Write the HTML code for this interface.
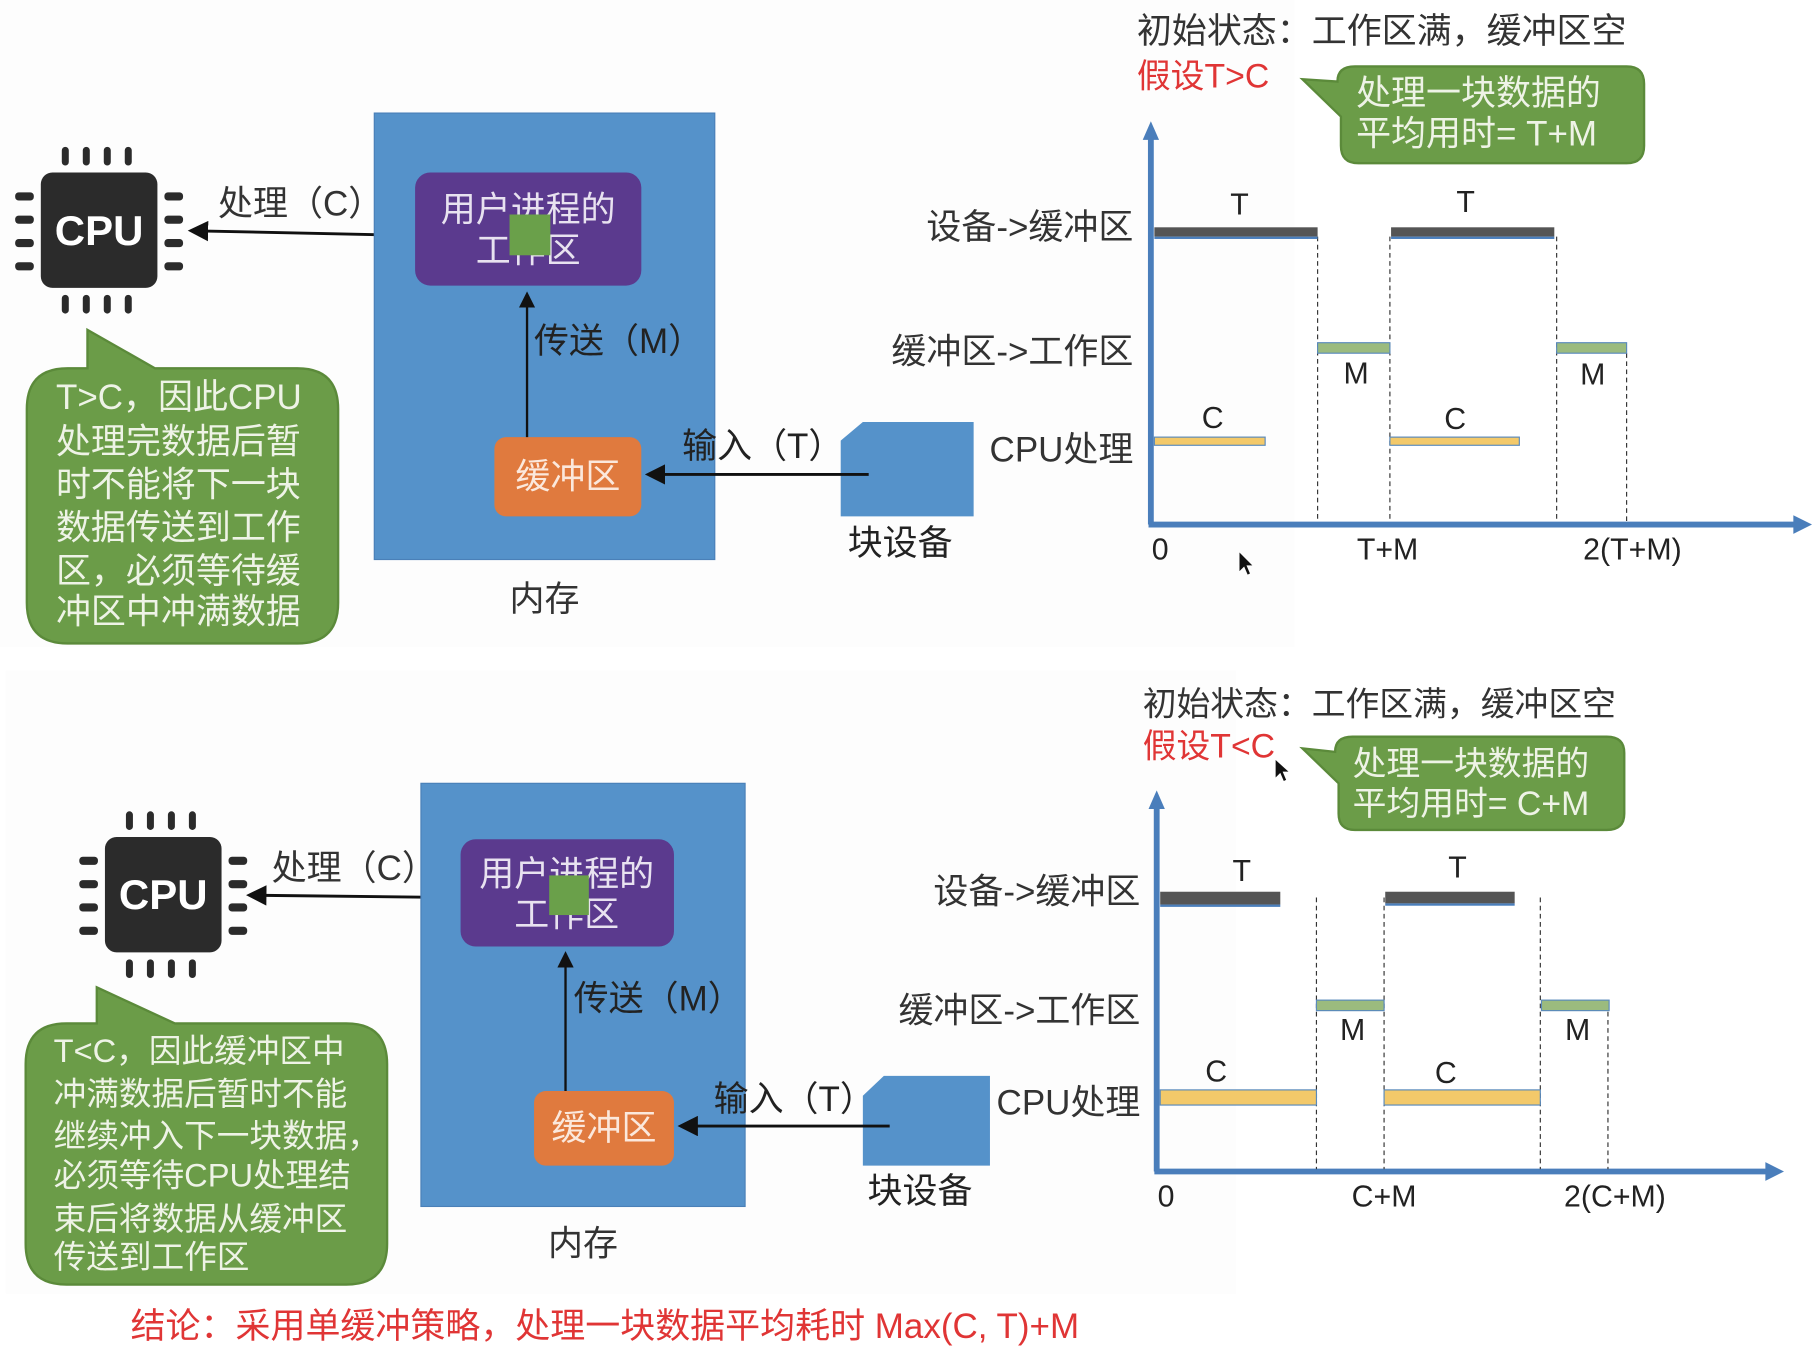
<!DOCTYPE html>
<html><head><meta charset="utf-8"><style>
html,body{margin:0;padding:0;background:#fff;}
svg{display:block;}
text{font-family:"Liberation Sans","Noto Sans CJK SC",sans-serif;}
</style></head><body>
<svg width="1819" height="1351" viewBox="0 0 1560 1159" preserveAspectRatio="none" xmlns="http://www.w3.org/2000/svg">
<defs>
<marker id="ah" markerWidth="7" markerHeight="7" refX="5" refY="3.5" orient="auto"><path d="M0,0 L7,3.5 L0,7 z" fill="#111"/></marker>
<g id="chip">
 <rect x="0" y="0" width="100" height="99" rx="10" fill="#2b2b2b"/>
 <text x="50" y="62" text-anchor="middle" font-size="36" font-weight="bold" fill="#fff">CPU</text>
 <rect x="18" y="-22" width="6" height="16" rx="3" fill="#2b2b2b"/><rect x="36" y="-22" width="6" height="16" rx="3" fill="#2b2b2b"/><rect x="54" y="-22" width="6" height="16" rx="3" fill="#2b2b2b"/><rect x="72" y="-22" width="6" height="16" rx="3" fill="#2b2b2b"/>
 <rect x="18" y="105" width="6" height="16" rx="3" fill="#2b2b2b"/><rect x="36" y="105" width="6" height="16" rx="3" fill="#2b2b2b"/><rect x="54" y="105" width="6" height="16" rx="3" fill="#2b2b2b"/><rect x="72" y="105" width="6" height="16" rx="3" fill="#2b2b2b"/>
 <rect x="-22" y="17" width="16" height="7" rx="3" fill="#2b2b2b"/><rect x="-22" y="37" width="16" height="7" rx="3" fill="#2b2b2b"/><rect x="-22" y="57" width="16" height="7" rx="3" fill="#2b2b2b"/><rect x="-22" y="77" width="16" height="7" rx="3" fill="#2b2b2b"/>
 <rect x="106" y="17" width="16" height="7" rx="3" fill="#2b2b2b"/><rect x="106" y="37" width="16" height="7" rx="3" fill="#2b2b2b"/><rect x="106" y="57" width="16" height="7" rx="3" fill="#2b2b2b"/><rect x="106" y="77" width="16" height="7" rx="3" fill="#2b2b2b"/>
</g>
</defs>
<rect x="0" y="0" width="1110" height="555" fill="#fdfdfd"/>
<rect x="5" y="575" width="1055" height="535" fill="#fdfdfd"/>

<!-- ========== TOP ========== -->
<text x="975" y="37" font-size="30" fill="#333">初始状态：工作区满，缓冲区空</text>
<text x="975" y="75" font-size="29" fill="#e03535">假设T&gt;C</text>
<path d="M1147,70 L1117,68 L1150,100 L1150,125 Q1150,140 1165,140 L1395,140 Q1410,140 1410,125 L1410,72 Q1410,57 1395,57 L1162,57 Q1147,57 1147,70 z" fill="#6b9c48" stroke="#5b8a3a" stroke-width="2"/>
<text x="1163" y="90" font-size="30" fill="#eef3e6">处理一块数据的</text>
<text x="1163" y="125" font-size="30" fill="#eef3e6">平均用时= T+M</text>

<line x1="987" y1="450" x2="987" y2="118" stroke="#4a7ebb" stroke-width="5"/>
<path d="M980,120 L987,104 L994,120 z" fill="#4a7ebb"/>
<line x1="985" y1="450" x2="1540" y2="450" stroke="#4a7ebb" stroke-width="5"/>
<path d="M1538,442 L1554,450 L1538,458 z" fill="#4a7ebb"/>
<g stroke="#333" stroke-width="1" stroke-dasharray="4,3">
<line x1="1130" y1="203" x2="1130" y2="448"/><line x1="1192" y1="203" x2="1192" y2="448"/><line x1="1335" y1="203" x2="1335" y2="448"/><line x1="1395" y1="303" x2="1395" y2="448"/>
</g>
<g font-size="30" fill="#333" text-anchor="end">
<text x="972" y="205">设备-&gt;缓冲区</text>
<text x="972" y="312">缓冲区-&gt;工作区</text>
<text x="972" y="396">CPU处理</text>
</g>
<rect x="990" y="195" width="140" height="8" fill="#555"/><rect x="990" y="203" width="140" height="2" fill="#4a7ebb"/>
<rect x="1193" y="195" width="140" height="8" fill="#555"/><rect x="1193" y="203" width="140" height="2" fill="#4a7ebb"/>
<rect x="1130" y="294" width="62" height="9" fill="#9bbb7e" stroke="#5a8abb" stroke-width="1"/>
<rect x="1335" y="294" width="60" height="9" fill="#9bbb7e" stroke="#5a8abb" stroke-width="1"/>
<rect x="990" y="375" width="95" height="7" fill="#f3c96a" stroke="#5a8abb" stroke-width="1"/>
<rect x="1192" y="375" width="111" height="7" fill="#f3c96a" stroke="#5a8abb" stroke-width="1"/>
<g font-size="26" fill="#222" text-anchor="middle">
<text x="1063" y="184">T</text><text x="1257" y="182">T</text>
<text x="1163" y="329">M</text><text x="1366" y="330">M</text>
<text x="1040" y="367">C</text><text x="1248" y="368">C</text>
<text x="995" y="480">0</text><text x="1190" y="480">T+M</text><text x="1400" y="480">2(T+M)</text>
</g>
<path d="M1063,474 L1063,490 L1067,486 L1070,493 L1072,492 L1069,485 L1074,485 z" fill="#111"/>

<use href="#chip" x="35" y="148"/>
<line x1="355" y1="202" x2="166" y2="198" stroke="#111" stroke-width="2.5" marker-end="url(#ah)"/>
<text x="187" y="185" font-size="30" fill="#333">处理（C）</text>
<rect x="321" y="97" width="292" height="383" fill="#5592ca" stroke="#4a80b8" stroke-width="1"/>
<text x="467" y="524" font-size="30" fill="#333" text-anchor="middle">内存</text>
<rect x="356" y="148" width="194" height="97" rx="13" fill="#5b3a8e"/>
<text x="453" y="190" font-size="30" fill="#e8e2f0" text-anchor="middle">用户进程的</text>
<text x="453" y="225" font-size="30" fill="#e8e2f0" text-anchor="middle">工作区</text>
<rect x="437" y="184" width="35" height="35" fill="#6aa04a"/>
<rect x="424" y="375" width="126" height="68" rx="10" fill="#e07a3e"/>
<text x="487" y="419" font-size="30" fill="#fbe8dc" text-anchor="middle">缓冲区</text>
<line x1="452" y1="375" x2="452" y2="254" stroke="#111" stroke-width="2" marker-end="url(#ah)"/>
<text x="458" y="303" font-size="30" fill="#222">传送（M）</text>
<path d="M721,378 L740,362 L835,362 L835,443 L721,443 z" fill="#5592ca"/>
<text x="772" y="476" font-size="30" fill="#222" text-anchor="middle">块设备</text>
<line x1="745" y1="407" x2="558" y2="407" stroke="#111" stroke-width="2.5" marker-end="url(#ah)"/>
<text x="585" y="393" font-size="30" fill="#222">输入（T）</text>
<path d="M75,283 L133,316 L255,316 Q290,316 290,351 L290,517 Q290,552 255,552 L58,552 Q23,552 23,517 L23,351 Q23,316 58,316 L75,316 z" fill="#6b9c48" stroke="#5b8a3a" stroke-width="2"/>
<g font-size="30" fill="#eef3e6">
<text x="48" y="351">T&gt;C，因此CPU</text>
<text x="48" y="389">处理完数据后暂</text>
<text x="48" y="426">时不能将下一块</text>
<text x="48" y="463">数据传送到工作</text>
<text x="48" y="500">区，必须等待缓</text>
<text x="48" y="535">冲区中冲满数据</text>
</g>

<!-- ========== BOTTOM ========== -->
<text x="980" y="614" font-size="29" fill="#333">初始状态：工作区满，缓冲区空</text>
<text x="980" y="650" font-size="29" fill="#e03535">假设T&lt;C</text>
<path d="M1145,645 L1117,642 L1148,672 L1148,698 Q1148,712 1162,712 L1378,712 Q1393,712 1393,698 L1393,646 Q1393,632 1378,632 L1160,632 Q1145,632 1145,645 z" fill="#6b9c48" stroke="#5b8a3a" stroke-width="2"/>
<text x="1160" y="665" font-size="29" fill="#eef3e6">处理一块数据的</text>
<text x="1160" y="699" font-size="29" fill="#eef3e6">平均用时= C+M</text>
<path d="M1094,652 L1094,667 L1098,663 L1101,670 L1103,669 L1100,662 L1105,662 z" fill="#111"/>

<line x1="992" y1="1005" x2="992" y2="692" stroke="#4a7ebb" stroke-width="5"/>
<path d="M985,694 L992,678 L999,694 z" fill="#4a7ebb"/>
<line x1="990" y1="1005" x2="1516" y2="1005" stroke="#4a7ebb" stroke-width="5"/>
<path d="M1514,997 L1530,1005 L1514,1013 z" fill="#4a7ebb"/>
<g stroke="#333" stroke-width="1" stroke-dasharray="4,3">
<line x1="1129" y1="770" x2="1129" y2="1003"/><line x1="1187" y1="770" x2="1187" y2="1003"/><line x1="1321" y1="770" x2="1321" y2="1003"/><line x1="1379" y1="868" x2="1379" y2="1003"/>
</g>
<g font-size="30" fill="#333" text-anchor="end">
<text x="978" y="775">设备-&gt;缓冲区</text>
<text x="978" y="877">缓冲区-&gt;工作区</text>
<text x="978" y="956">CPU处理</text>
</g>
<rect x="995" y="765" width="103" height="11" fill="#555"/><rect x="995" y="776" width="103" height="2" fill="#4a7ebb"/>
<rect x="1188" y="765" width="111" height="10" fill="#555"/><rect x="1188" y="775" width="111" height="2" fill="#4a7ebb"/>
<rect x="1129" y="858" width="58" height="9" fill="#9bbb7e" stroke="#5a8abb" stroke-width="1"/>
<rect x="1322" y="858" width="58" height="9" fill="#9bbb7e" stroke="#5a8abb" stroke-width="1"/>
<rect x="995" y="935" width="134" height="13" fill="#f3c96a" stroke="#5a8abb" stroke-width="1"/>
<rect x="1187" y="935" width="134" height="13" fill="#f3c96a" stroke="#5a8abb" stroke-width="1"/>
<g font-size="26" fill="#222" text-anchor="middle">
<text x="1065" y="756">T</text><text x="1250" y="753">T</text>
<text x="1160" y="892">M</text><text x="1353" y="892">M</text>
<text x="1043" y="928">C</text><text x="1240" y="929">C</text>
<text x="1000" y="1035">0</text><text x="1187" y="1035">C+M</text><text x="1385" y="1035">2(C+M)</text>
</g>

<use href="#chip" x="90" y="718"/>
<line x1="392" y1="770" x2="216" y2="768" stroke="#111" stroke-width="2.5" marker-end="url(#ah)"/>
<text x="233" y="755" font-size="30" fill="#333">处理（C）</text>
<rect x="361" y="672" width="278" height="363" fill="#5592ca" stroke="#4a80b8" stroke-width="1"/>
<text x="500" y="1077" font-size="30" fill="#333" text-anchor="middle">内存</text>
<rect x="395" y="720" width="183" height="92" rx="13" fill="#5b3a8e"/>
<text x="486" y="760" font-size="30" fill="#e8e2f0" text-anchor="middle">用户进程的</text>
<text x="486" y="795" font-size="30" fill="#e8e2f0" text-anchor="middle">工作区</text>
<rect x="471" y="751" width="34" height="34" fill="#6aa04a"/>
<rect x="458" y="936" width="120" height="64" rx="10" fill="#e07a3e"/>
<text x="518" y="978" font-size="30" fill="#fbe8dc" text-anchor="middle">缓冲区</text>
<line x1="485" y1="936" x2="485" y2="820" stroke="#111" stroke-width="2" marker-end="url(#ah)"/>
<text x="492" y="867" font-size="30" fill="#222">传送（M）</text>
<path d="M740,940 L758,923 L849,923 L849,1000 L740,1000 z" fill="#5592ca"/>
<text x="789" y="1032" font-size="30" fill="#222" text-anchor="middle">块设备</text>
<line x1="763" y1="966" x2="586" y2="966" stroke="#111" stroke-width="2.5" marker-end="url(#ah)"/>
<text x="612" y="953" font-size="30" fill="#222">输入（T）</text>
<path d="M83,847 L150,878 L297,878 Q332,878 332,913 L332,1067 Q332,1102 297,1102 L57,1102 Q22,1102 22,1067 L22,913 Q22,878 57,878 L83,878 z" fill="#6b9c48" stroke="#5b8a3a" stroke-width="2"/>
<g font-size="28" fill="#eef3e6">
<text x="46" y="911">T&lt;C，因此缓冲区中</text>
<text x="46" y="948">冲满数据后暂时不能</text>
<text x="46" y="984">继续冲入下一块数据，</text>
<text x="46" y="1018">必须等待CPU处理结</text>
<text x="46" y="1055">束后将数据从缓冲区</text>
<text x="46" y="1088">传送到工作区</text>
</g>
<text x="112" y="1148" font-size="30" fill="#e03535">结论：采用单缓冲策略，处理一块数据平均耗时 Max(C, T)+M</text>
</svg>
</body></html>
